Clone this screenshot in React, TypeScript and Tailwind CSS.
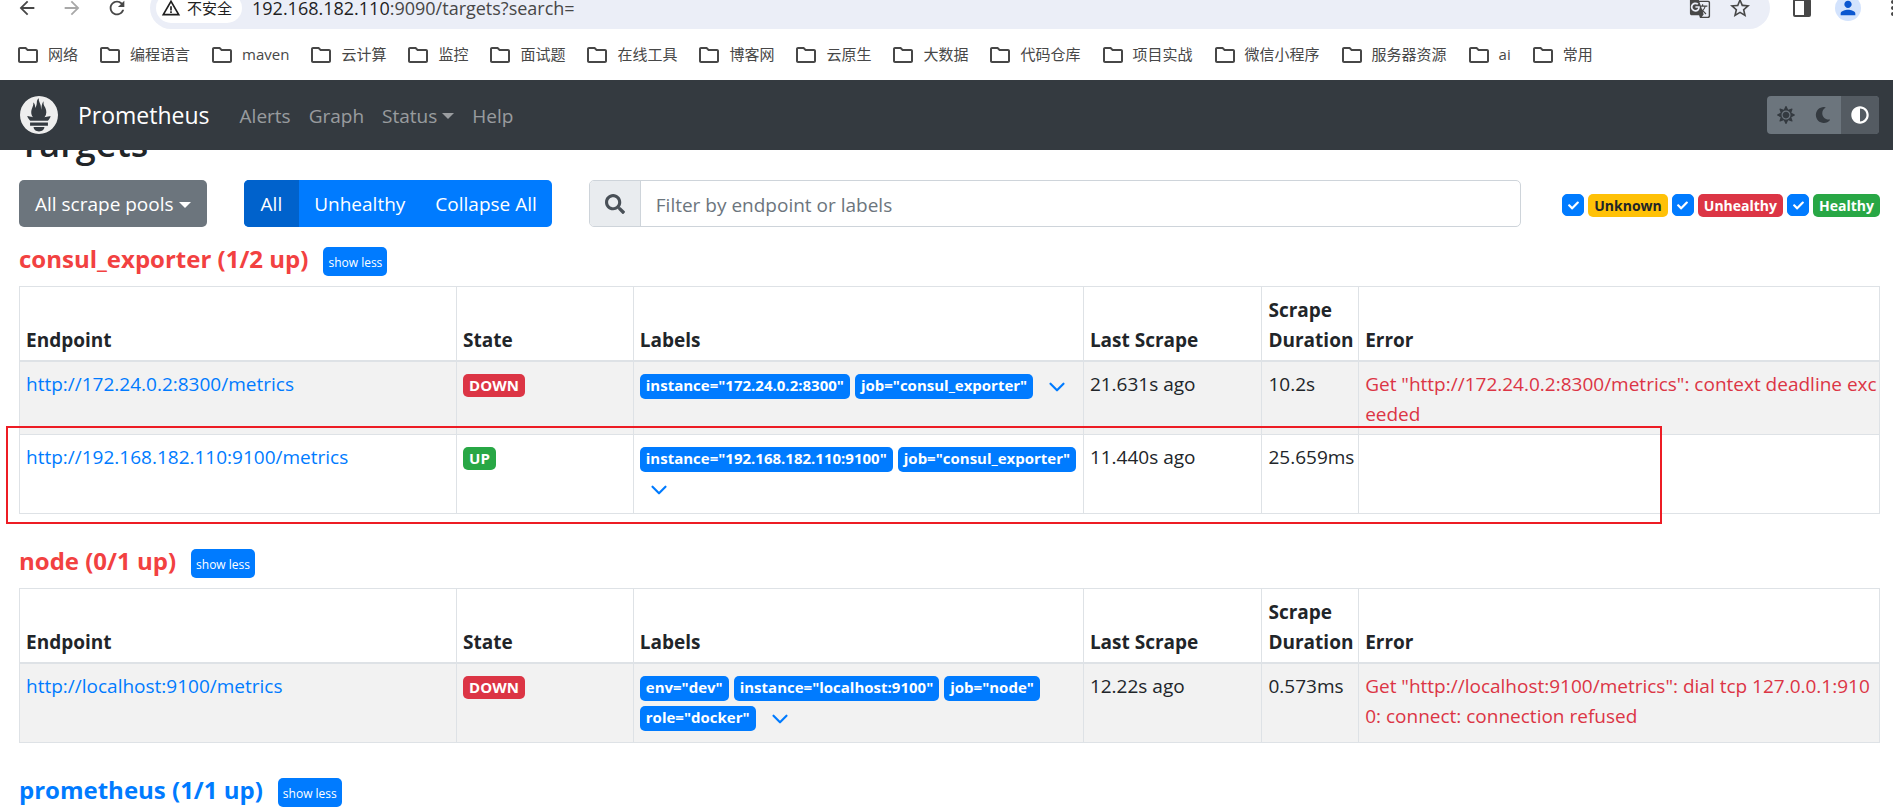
import { ReactNode } from 'react'
import clsx from 'clsx'
import { ChevronDown } from 'lucide-react'
import { FaAdjust, FaCheck, FaMoon, FaSearch, FaSun } from 'react-icons/fa'
import {
  MdArrowBack,
  MdArrowForward,
  MdGTranslate,
  MdMoreVert,
  MdOutlineFolder,
  MdPerson,
  MdRefresh,
  MdStarBorder,
  MdWarningAmber,
} from 'react-icons/md'
import { SiPrometheus } from 'react-icons/si'

const bookmarks = [
  '网络',
  '编程语言',
  'maven',
  '云计算',
  '监控',
  '面试题',
  '在线工具',
  '博客网',
  '云原生',
  '大数据',
  '代码仓库',
  '项目实战',
  '微信小程序',
  '服务器资源',
  'ai',
  '常用',
]

type Target = {
  endpoint: string
  state: 'UP' | 'DOWN'
  labels: [string, string][]
  lastScrape: string
  duration: string
  error?: string
}

const consulTargets: Target[] = [
  {
    endpoint: 'http://172.24.0.2:8300/metrics',
    state: 'DOWN',
    labels: [['instance', '172.24.0.2:8300'], ['job', 'consul_exporter']],
    lastScrape: '21.631s ago',
    duration: '10.2s',
    error: 'Get "http://172.24.0.2:8300/metrics": context deadline exceeded',
  },
  {
    endpoint: 'http://192.168.182.110:9100/metrics',
    state: 'UP',
    labels: [['instance', '192.168.182.110:9100'], ['job', 'consul_exporter']],
    lastScrape: '11.440s ago',
    duration: '25.659ms',
  },
]

const nodeTargets: Target[] = [
  {
    endpoint: 'http://localhost:9100/metrics',
    state: 'DOWN',
    labels: [['env', 'dev'], ['instance', 'localhost:9100'], ['job', 'node'], ['role', 'docker']],
    lastScrape: '12.22s ago',
    duration: '0.573ms',
    error: 'Get "http://localhost:9100/metrics": dial tcp 127.0.0.1:9100: connect: connection refused',
  },
]

const healthFilters = [
  { label: 'Unknown', color: 'bg-[#ffc107] text-[#212529]' },
  { label: 'Unhealthy', color: 'bg-[#dc3545] text-white' },
  { label: 'Healthy', color: 'bg-[#28a745] text-white' },
]

function Badge({ color, children }: { color: string; children: ReactNode }) {
  return (
    <span className={clsx('inline-block rounded-[5px] px-[6px] leading-[23px] font-bold whitespace-nowrap', color)}>
      {children}
    </span>
  )
}

function Caret() {
  return <span className="border-x-6 border-t-6 border-x-transparent border-t-current" />
}

function BrowserBar() {
  return (
    <div className="h-20 bg-white text-[#474747]">
      <div className="flex h-[29px] items-end overflow-hidden">
        <div className="flex h-[42px] shrink-0 items-center gap-[23px] pl-4 pr-[22px]">
          <button aria-label="Back"><MdArrowBack size={22} /></button>
          <button aria-label="Forward" className="text-[#a8a8a8]"><MdArrowForward size={22} /></button>
          <button aria-label="Reload"><MdRefresh size={22} /></button>
        </div>
        <div className="flex h-[42px] flex-1 items-center rounded-full bg-[#ebeef7] pl-[6px] pr-[18px]">
          <span className="flex h-[30px] items-center gap-[6px] rounded-full bg-white pl-[5px] pr-[10px] text-[15px] text-[#1f1f1f]">
            <MdWarningAmber size={20} />
            不安全
          </span>
          <span className="ml-[10px] flex-1 text-[18px]">
            <span className="text-[#1f1f1f]">192.168.182.110</span>:9090/targets?search=
          </span>
          <button aria-label="Translate"><MdGTranslate size={22} /></button>
          <button aria-label="Bookmark this tab" className="ml-[17px]"><MdStarBorder size={24} /></button>
        </div>
        <div className="-mr-3 flex h-[42px] shrink-0 items-center pl-[23px]">
          <button aria-label="Side panel">
            <svg width="18" height="18" viewBox="0 0 18 18">
              <rect x="1" y="1" width="16" height="16" rx="1" fill="none" stroke="currentColor" strokeWidth="2" />
              <rect x="11" y="1" width="6" height="16" fill="currentColor" />
            </svg>
          </button>
          <button aria-label="Profile" className="ml-6 rounded-full bg-[#d3e3fd] p-[2px] text-[#0b57d0]">
            <MdPerson size={22} />
          </button>
          <button aria-label="More" className="ml-5"><MdMoreVert size={24} /></button>
        </div>
      </div>
      <nav className="flex h-[51px] items-center gap-5 overflow-hidden pl-4 text-[15px]">
        {bookmarks.map((name) => (
          <a key={name} href="#" className="flex shrink-0 items-center gap-2">
            <MdOutlineFolder size={24} />
            {name}
          </a>
        ))}
      </nav>
    </div>
  )
}

function Navbar() {
  return (
    <header className="flex h-[70px] items-center bg-[#343a40] pl-5 pr-[14px]">
      <SiPrometheus size={38} className="shrink-0 text-[#eeeeee]" />
      <a href="#" className="ml-5 text-[23px] text-white">Prometheus</a>
      <nav className="ml-[30px] flex items-center gap-[18px] pt-[2px] text-[19px] text-white/50">
        <a href="#">Alerts</a>
        <a href="#">Graph</a>
        <a href="#" className="flex items-center gap-[5px]">
          Status
          <Caret />
        </a>
        <a href="#">Help</a>
      </nav>
      <div className="ml-auto flex h-[38px] overflow-hidden rounded-[4px] bg-[#6c757d] text-[#343a40]">
        <button aria-label="Light theme" className="flex w-[37px] items-center justify-center"><FaSun size={18} /></button>
        <button aria-label="Dark theme" className="flex w-[37px] items-center justify-center"><FaMoon size={16} /></button>
        <button aria-label="Browser theme" className="flex w-[38px] items-center justify-center bg-[#545b62] text-white">
          <FaAdjust size={18} />
        </button>
      </div>
    </header>
  )
}

function FilterBar() {
  return (
    <div className="flex h-[47px] items-stretch text-[19px]">
      <button className="flex shrink-0 items-center gap-[5px] rounded-[5px] bg-[#6c757d] px-4 pt-[2px] text-white">
        All scrape pools
        <Caret />
      </button>
      <div className="ml-[37px] flex shrink-0 overflow-hidden rounded-[5px] bg-[#007bff] text-white">
        <button className="bg-[#0062cc] px-[17px] pt-[2px]">All</button>
        <button className="px-[15px] pt-[2px]">Unhealthy</button>
        <button className="px-[15px] pt-[2px]">Collapse All</button>
      </div>
      <div className="ml-[37px] flex flex-1 rounded-[5px] border border-[#ced4da]">
        <span className="flex w-[51px] items-center justify-center rounded-l-[4px] border-r border-[#ced4da] bg-[#e9ecef] text-[#495057]">
          <FaSearch size={20} />
        </span>
        <input
          aria-label="Filter by endpoint or labels"
          placeholder="Filter by endpoint or labels"
          className="min-w-0 flex-1 px-[15px] pt-[3px] outline-none placeholder:text-[#6c757d]"
        />
      </div>
      <div className="ml-[41px] flex shrink-0 items-center gap-1 pt-[3px] text-[14px]">
        {healthFilters.map((filter) => (
          <label key={filter.label} className="flex items-center gap-1">
            <span className="relative flex">
              <input type="checkbox" defaultChecked className="size-[22px] appearance-none rounded-[5px] border border-[#adb5bd] checked:border-[#007bff] checked:bg-[#007bff]" />
              <FaCheck size={11} className="pointer-events-none absolute inset-0 m-auto text-white" />
            </span>
            <Badge color={filter.color}>{filter.label}</Badge>
          </label>
        ))}
      </div>
    </div>
  )
}

function PoolHeading({ title, healthy }: { title: string; healthy?: boolean }) {
  return (
    <div className="flex h-[29px] items-center gap-[15px]">
      <h3 className={clsx('pb-[6px] text-[24px] leading-[30px] font-bold', healthy ? 'text-[#007bff]' : 'text-[#f24141]')}>
        {title}
      </h3>
      <button className="h-[29px] rounded-[5px] bg-[#007bff] px-[5px] pt-[2px] text-[12px] text-white">show less</button>
    </div>
  )
}

const thClass = 'border border-b-2 border-[#dee2e6] px-[6px] pt-[8px] pb-[5px] text-left align-bottom font-bold'
const tdClass = 'border border-[#dee2e6] pl-[6px] pt-[7px] pb-[5px]'

function TargetTable({ targets }: { targets: Target[] }) {
  return (
    <table className="w-full table-fixed border-collapse text-[19px] leading-[30px]">
      <thead>
        <tr>
          <th className={clsx(thClass, 'w-[23.5%]')}>Endpoint</th>
          <th className={clsx(thClass, 'w-[9.5%]')}>State</th>
          <th className={clsx(thClass, 'w-[24.2%]')}>Labels</th>
          <th className={clsx(thClass, 'w-[9.6%]')}>Last Scrape</th>
          <th className={clsx(thClass, 'w-[5.2%]')}>Scrape Duration</th>
          <th className={thClass}>Error</th>
        </tr>
      </thead>
      <tbody>
        {targets.map((target) => (
          <tr key={target.endpoint} className="align-top odd:bg-[#f2f2f2]">
            <td className={tdClass}>
              <a href={target.endpoint} className="text-[#007bff]">{target.endpoint}</a>
            </td>
            <td className={tdClass}>
              <div className="flex pt-[5px] text-[15px]">
                <Badge color={target.state === 'UP' ? 'bg-[#28a745] text-white' : 'bg-[#dc3545] text-white'}>
                  {target.state}
                </Badge>
              </div>
            </td>
            <td className={tdClass}>
              <div className="flex flex-wrap items-start gap-x-[5px] text-[15px]">
                {target.labels.map(([name, value]) => (
                  <span key={name} className="flex h-[30px] pt-[5px]">
                    <Badge color="bg-[#007bff] text-white">{`${name}="${value}"`}</Badge>
                  </span>
                ))}
                <button aria-label="Show discovered labels" className="flex h-9 w-[38px] items-center justify-center text-[#007bff]">
                  <ChevronDown size={26} />
                </button>
              </div>
            </td>
            <td className={tdClass}>{target.lastScrape}</td>
            <td className={tdClass}>{target.duration}</td>
            <td className={clsx(tdClass, 'pr-[2px] break-all text-[#dc3545]')}>{target.error}</td>
          </tr>
        ))}
      </tbody>
    </table>
  )
}

export default function App() {
  return (
    <div className="overflow-hidden bg-white font-['Open_Sans','Noto_Sans_CJK_SC',sans-serif] text-[#212529]">
      <BrowserBar />
      <Navbar />
      <main className="pl-[19px] pr-[13px]">
        {/* Page title, scrolled halfway under the navbar */}
        <div className="flex h-[18px] items-end overflow-hidden">
          <h2 className="text-[36px] leading-[48px] font-semibold">Targets</h2>
        </div>
        <div className="pt-3">
          <FilterBar />
        </div>

        <section className="pt-5">
          <PoolHeading title="consul_exporter (1/2 up)" />
          <div className="relative mt-[10px]">
            <TargetTable targets={consulTargets} />
            {/* Highlight around the target that is up */}
            <div className="pointer-events-none absolute top-[140px] -bottom-[10px] -left-[13px] w-[89%] border-2 border-[#ed1c24]" />
          </div>
        </section>

        <section className="pt-[35px]">
          <PoolHeading title="node (0/1 up)" />
          <div className="mt-[10px]">
            <TargetTable targets={nodeTargets} />
          </div>
        </section>

        <section className="pt-[35px] pb-[6px]">
          <PoolHeading title="prometheus (1/1 up)" healthy />
        </section>
      </main>
    </div>
  )
}
